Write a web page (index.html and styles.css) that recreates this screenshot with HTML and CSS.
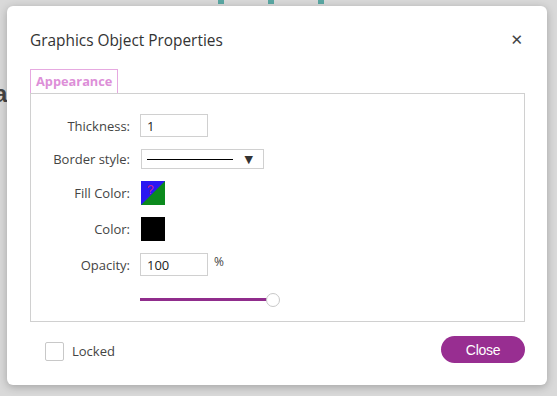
FILE: index.html
```html
<!DOCTYPE html>
<html lang="en">
<head>
    <meta charset="UTF-8">
    <title>Graphics Object Properties</title>
    <link rel="stylesheet" href="styles.css">
</head>
<body>
    <div class="backdrop">
        <div class="page-marks">
            <span class="mark"></span>
            <span class="mark"></span>
            <span class="mark"></span>
        </div>
        <div class="page-letter">a</div>

        <div class="dialog">
            <div class="dialog-header">
                <h2 class="dialog-title">Graphics Object Properties</h2>
                <span class="dialog-close">&#x2715;</span>
            </div>

            <div class="tabs">
                <span class="tab">Appearance</span>
            </div>

            <div class="panel">
                <div class="row">
                    <label class="row-label">Thickness:</label>
                    <input class="text-input" type="text" value="1">
                </div>
                <div class="row">
                    <label class="row-label">Border style:</label>
                    <div class="line-select">
                        <span class="line-sample"></span>
                        <span class="caret">&#9660;</span>
                    </div>
                </div>
                <div class="row">
                    <label class="row-label">Fill Color:</label>
                    <svg class="swatch" width="24" height="24" viewBox="0 0 24 24">
                        <rect width="24" height="24" fill="#0b8a1d"/>
                        <polygon points="0,0 24,0 0,24" fill="#2a17f2"/>
                        <text x="6" y="13" font-size="12" font-family="Liberation Sans" fill="#d0208a">?</text>
                    </svg>
                </div>
                <div class="row">
                    <label class="row-label">Color:</label>
                    <span class="swatch swatch-black"></span>
                </div>
                <div class="row">
                    <label class="row-label">Opacity:</label>
                    <input class="text-input" type="text" value="100">
                    <span class="unit">%</span>
                </div>
                <div class="row">
                    <span class="row-label"></span>
                    <div class="slider">
                        <span class="slider-track"></span>
                        <span class="slider-thumb"></span>
                    </div>
                </div>
            </div>

            <div class="dialog-footer">
                <label class="check">
                    <span class="check-box"></span>
                    Locked
                </label>
                <button class="btn-close">Close</button>
            </div>
        </div>
    </div>
</body>
</html>
```

FILE: styles.css
```css
/* General Styles */
body {
    margin: 0;
    padding: 0;
    font-family: "Open Sans", "Noto Sans", sans-serif;
    background: #d9d9d9;
    width: 557px;
    height: 396px;
    overflow: hidden;
}

.backdrop {
    position: relative;
    width: 557px;
    height: 396px;
    padding: 6px 0 0 7px;
    box-sizing: border-box;
}

/* Bits of the page behind the overlay */
.page-marks {
    position: absolute;
    top: 0;
    left: 218px;
    display: flex;
    gap: 44px;
}

.mark {
    width: 6px;
    height: 4px;
    background: #5aa7a3;
}

.page-letter {
    position: absolute;
    left: -6px;
    top: 80px;
    font: bold 24px "Liberation Sans", sans-serif;
    color: #444;
}

/* Dialog */
.dialog {
    position: relative;
    width: 540px;
    height: 379px;
    background: #fff;
    border-radius: 6px;
    box-shadow: 0 2px 8px rgba(0, 0, 0, 0.25);
    padding: 0 22px 0 23px;
    box-sizing: border-box;
}

.dialog-header {
    display: flex;
    justify-content: space-between;
    align-items: center;
    height: 63px;
    padding-top: 5px;
    box-sizing: border-box;
}

.dialog-title {
    margin: 0;
    font-size: 15.4px;
    font-weight: normal;
    color: #333;
}

.dialog-close {
    font: bold 15px "DejaVu Sans", sans-serif;
    color: #444;
    margin-right: 2px;
}

.tabs {
    display: flex;
}

.tab {
    border: 1px solid #e6a9e0;
    border-bottom: none;
    padding: 3px 5px 3px 5px;
    font-size: 12.8px;
    font-weight: bold;
    color: #dd8fd8;
    line-height: 17px;
}

.panel {
    border: 1px solid #d0d0d0;
    height: 229px;
    padding-top: 20px;
    box-sizing: border-box;
}

.row {
    display: flex;
    align-items: center;
    margin-bottom: 12px;
}

.row-label {
    width: 99px;
    text-align: right;
    padding-right: 10px;
    font-size: 13px;
    color: #444;
}

.text-input {
    width: 68px;
    height: 23px;
    box-sizing: border-box;
    border: 1px solid #d0d0d0;
    padding: 0 6px;
    font: 13px "Open Sans", sans-serif;
    color: #222;
    outline: none;
}

.unit {
    font-size: 12px;
    color: #444;
    margin-left: 6px;
    align-self: flex-start;
}

.line-select {
    display: flex;
    align-items: center;
    width: 123px;
    height: 20px;
    box-sizing: border-box;
    border: 1px solid #d0d0d0;
    padding: 0 10px 0 5px;
    margin-left: 1px;
}

.line-sample {
    width: 86px;
    height: 1px;
    background: #000;
}

.caret {
    margin-left: auto;
    font: 11px "DejaVu Sans", sans-serif;
    color: #333;
}

.swatch {
    display: block;
    width: 24px;
    height: 24px;
    margin-left: 1px;
}

.swatch-black {
    background: #000;
}

.slider {
    position: relative;
    width: 140px;
    height: 14px;
    margin-top: 4px;
}

.slider-track {
    position: absolute;
    left: 0;
    top: 6px;
    width: 130px;
    height: 3px;
    background: #902d8c;
}

.slider-thumb {
    position: absolute;
    left: 126px;
    top: 1px;
    width: 12px;
    height: 12px;
    border-radius: 50%;
    background: #fff;
    border: 1px solid #c8c8c8;
}

/* Footer */
.dialog-footer {
    display: flex;
    justify-content: space-between;
    align-items: center;
    padding: 14px 0 0 15px;
}

.check {
    display: flex;
    align-items: center;
    gap: 8px;
    font-size: 13px;
    color: #444;
    margin-top: 3px;
}

.check-box {
    width: 17px;
    height: 17px;
    border: 1px solid #c8c8c8;
    border-radius: 2px;
}

.btn-close {
    width: 84px;
    height: 27px;
    border: none;
    border-radius: 14px;
    background: #982e91;
    color: #fff;
    font: 14px "Liberation Sans", sans-serif;
    letter-spacing: -0.3px;
}
```
